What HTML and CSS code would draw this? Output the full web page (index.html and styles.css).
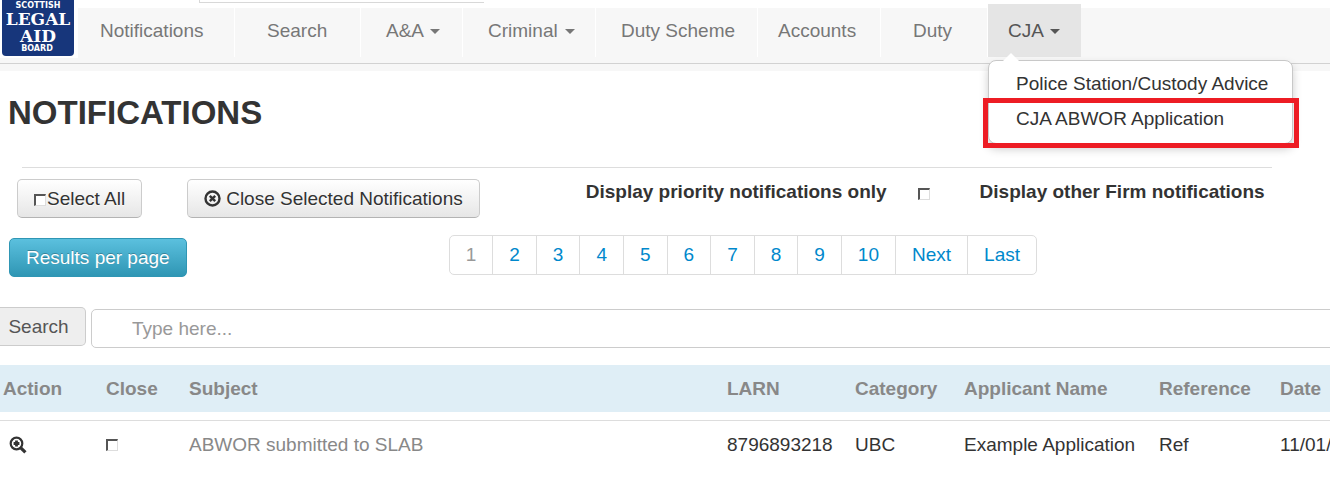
FILE: index.html
```html
<!DOCTYPE html>
<html lang="en">
<head>
  <meta charset="UTF-8">
  <meta name="viewport" content="width=device-width, initial-scale=1.0">
  <title>Notifications</title>
  <link rel="stylesheet" href="styles.css">
</head>
<body>
  <header class="header">
    <div class="header__strip"></div>
    <a class="logo" href="#" aria-label="Scottish Legal Aid Board">
      <svg width="72" height="56" viewBox="0 0 72 56">
        <path d="M0 0h72v52a4 4 0 0 1-4 4H4a4 4 0 0 1-4-4z" fill="#17367b"/>
        <g fill="#fff" text-anchor="middle">
          <text class="logo__small" x="36" y="8">SCOTTISH</text>
          <text class="logo__big" x="36" y="25">LEGAL</text>
          <text class="logo__big" x="36" y="42">AID</text>
          <text class="logo__small" x="35" y="51">BOARD</text>
        </g>
      </svg>
    </a>
    <nav class="nav">
      <ul class="nav__list">
        <li class="nav__item"><a class="nav__link" href="#">Notifications</a></li>
        <li class="nav__item nav__item--wide"><a class="nav__link" href="#">Search</a></li>
        <li class="nav__item nav__item--mid"><a class="nav__link" href="#">A&amp;A <span class="caret"></span></a></li>
        <li class="nav__item nav__item--mid"><a class="nav__link" href="#">Criminal <span class="caret"></span></a></li>
        <li class="nav__item nav__item--mid"><a class="nav__link" href="#">Duty Scheme</a></li>
        <li class="nav__item"><a class="nav__link" href="#">Accounts</a></li>
        <li class="nav__item nav__item--wide"><a class="nav__link" href="#">Duty</a></li>
        <li class="nav__item nav__item--open">
          <a class="nav__link" href="#">CJA <span class="caret"></span></a>
          <ul class="menu">
            <li><a class="menu__link" href="#">Police Station/Custody Advice</a></li>
            <li class="menu__item--marked"><a class="menu__link" href="#">CJA ABWOR Application</a></li>
          </ul>
        </li>
      </ul>
    </nav>
  </header>

  <main>
    <h1 class="title">NOTIFICATIONS</h1>
    <hr class="rule">

    <div class="toolbar">
      <label class="btn"><input class="check check--inline" type="checkbox">Select All</label>
      <button class="btn btn--close" type="button">
        <svg class="icon" width="17" height="17" viewBox="0 0 17 17">
          <circle cx="8.5" cy="8.5" r="7" fill="none" stroke="#333" stroke-width="2.4"/>
          <path d="M5.8 5.8l5.4 5.4M11.2 5.8l-5.4 5.4" stroke="#333" stroke-width="2.4"/>
        </svg>
        Close Selected Notifications
      </button>
      <label class="toolbar__label" for="priority">Display priority notifications only</label>
      <input id="priority" class="check toolbar__check" type="checkbox">
      <span class="toolbar__label toolbar__label--firm">Display other Firm notifications</span>
    </div>

    <div class="pager">
      <button class="btn btn--info" type="button">Results per page</button>
      <ul class="pagination">
        <li><span class="pagination__link pagination__link--current">1</span></li>
        <li><a class="pagination__link" href="#">2</a></li>
        <li><a class="pagination__link" href="#">3</a></li>
        <li><a class="pagination__link" href="#">4</a></li>
        <li><a class="pagination__link" href="#">5</a></li>
        <li><a class="pagination__link" href="#">6</a></li>
        <li><a class="pagination__link" href="#">7</a></li>
        <li><a class="pagination__link" href="#">8</a></li>
        <li><a class="pagination__link" href="#">9</a></li>
        <li><a class="pagination__link" href="#">10</a></li>
        <li><a class="pagination__link" href="#">Next</a></li>
        <li><a class="pagination__link" href="#">Last</a></li>
      </ul>
    </div>

    <form class="search">
      <button class="search__btn" type="button">Search</button>
      <input class="search__input" type="text" placeholder="Type here..." aria-label="Search">
    </form>

    <table class="table">
      <colgroup>
        <col class="col-action">
        <col class="col-close">
        <col>
        <col class="col-larn">
        <col class="col-category">
        <col class="col-name">
        <col class="col-reference">
        <col class="col-date">
      </colgroup>
      <thead>
        <tr>
          <th>Action</th>
          <th>Close</th>
          <th>Subject</th>
          <th>LARN</th>
          <th>Category</th>
          <th>Applicant Name</th>
          <th>Reference</th>
          <th>Date</th>
        </tr>
      </thead>
      <tbody>
        <tr>
          <td class="cell--action">
            <a href="#" aria-label="View">
              <svg class="icon" width="18" height="18" viewBox="0 0 18 18">
                <circle cx="7.5" cy="7.5" r="5.8" fill="none" stroke="#333" stroke-width="2.2"/>
                <path d="M11.8 11.8l4.6 4.6" stroke="#333" stroke-width="3.2"/>
                <path d="M7.5 4.6v5.8M4.6 7.5h5.8" stroke="#333" stroke-width="2.8"/>
              </svg>
            </a>
          </td>
          <td><input class="check" type="checkbox" aria-label="Close notification"></td>
          <td class="cell--subject">ABWOR submitted to SLAB</td>
          <td>8796893218</td>
          <td>UBC</td>
          <td>Example Application</td>
          <td>Ref</td>
          <td>11/01/</td>
        </tr>
      </tbody>
    </table>
  </main>
</body>
</html>
```
FILE: styles.css
```css
* {
  box-sizing: border-box;
  margin: 0;
  padding: 0;
}

body {
  overflow-x: hidden;
  background: #fff;
  color: #333;
  font-family: "Liberation Sans", Arial, sans-serif;
  font-size: 19px;
  line-height: 26px;
}

ul {
  list-style: none;
}

a {
  color: inherit;
  text-decoration: none;
}

button,
input {
  font: inherit;
}

.icon {
  display: block;
}

/* header */
.header {
  position: relative;
  display: flex;
  height: 71px;
  padding-left: 80px;
  background: linear-gradient(#fff 8px, #f7f7f7 8px, #f7f7f7 63px, #d2d2d2 63px, #d2d2d2 64px, #f7f7f7 64px);
}

.header__strip {
  position: absolute;
  top: 0;
  left: 199px;
  width: 285px;
  height: 3px;
  border-bottom: 1px solid #d8d8d8;
  border-left: 1px solid #d8d8d8;
}

.logo {
  position: absolute;
  top: 0;
  left: 0;
  height: 58px;
  padding: 0 4px 0 2px;
  background: #fff;
}

.logo svg {
  display: block;
}

.logo__small {
  font: bold 8px "DejaVu Sans", sans-serif;
}

.logo__big {
  font: bold 17px "DejaVu Serif", serif;
}

.nav {
  padding-top: 4px;
}

.nav__list {
  display: grid;
  grid-template-columns: 155px 126px 102px 133px 162px 123px 107px 93px;
}

.nav__item {
  position: relative;
  height: 53px;
  padding-left: 20px;
  border-right: 1px solid #fff;
  color: #777;
  line-height: 53px;
  white-space: nowrap;
}

.nav__item--mid {
  padding-left: 25px;
}

.nav__item--wide {
  padding-left: 32px;
}

.nav__item--open {
  border-right: 0;
  background: #e5e5e5;
  color: #555;
}

.caret {
  display: inline-block;
  margin-left: 2px;
  border-top: 5px solid currentColor;
  border-right: 5px solid transparent;
  border-left: 5px solid transparent;
  vertical-align: middle;
}

.menu {
  position: absolute;
  z-index: 1;
  top: 56px;
  left: 0;
  width: 305px;
  height: 84px;
  padding-top: 9px;
  border: 1px solid #c8c8c8;
  border-radius: 8px;
  background: #fff;
  box-shadow: 0 5px 10px rgba(0, 0, 0, 0.2);
  color: #333;
  line-height: 28px;
}

.menu::before {
  content: "";
  position: absolute;
  top: -8px;
  left: 14px;
  border-right: 8px solid transparent;
  border-bottom: 8px solid #fff;
  border-left: 8px solid transparent;
}

.menu__link {
  display: block;
  padding-left: 27px;
}

.menu__item--marked {
  height: 50px;
  margin: 0 -7px 0 -6px;
  padding-top: 2px;
  border: 5px solid #ed1c24;
}

.menu__item--marked .menu__link {
  padding-left: 28px;
}

/* page top */
.title {
  padding: 23px 8px 0;
  font-size: 33px;
  line-height: 38px;
}

.rule {
  margin: 35px 58px 0 22px;
  border: 0;
  border-top: 1px solid #ddd;
}

.toolbar {
  display: flex;
  padding: 11px 0 0 17px;
  white-space: nowrap;
}

.btn {
  display: flex;
  align-items: center;
  height: 39px;
  padding: 0 16px;
  border: 1px solid #ccc;
  border-bottom-color: #b3b3b3;
  border-radius: 5px;
  background: linear-gradient(#fff, #e6e6e6);
  color: #333;
  text-shadow: 0 1px 1px rgba(255, 255, 255, 0.75);
}

.btn--close {
  gap: 5px;
  margin-left: 45px;
}

.btn--info {
  margin-top: 3px;
  border-color: #2f96b4;
  background: linear-gradient(#5bc0de, #2f96b4);
  color: #fff;
  text-shadow: 0 -1px 0 rgba(0, 0, 0, 0.25);
}

.check {
  appearance: none;
  display: block;
  width: 12px;
  height: 12px;
  border: 1px solid #ddd;
  border-top: 2px solid #555;
  border-left: 2px solid #555;
  background: #fff;
}

.check--inline {
  margin: 2px 1px 0 0;
}

.toolbar__label {
  margin-left: 106px;
  font-weight: bold;
}

.toolbar__check {
  margin: 9px 0 0 31px;
}

.toolbar__label--firm {
  margin-left: 50px;
}

.pager {
  display: flex;
  align-items: flex-start;
  padding: 17px 0 0 9px;
}

.pagination {
  display: flex;
  margin-left: 262px;
  border: 1px solid #ddd;
  border-radius: 5px;
}

.pagination li + li {
  border-left: 1px solid #ddd;
}

.pagination__link {
  display: block;
  padding: 0 16px;
  color: #08c;
  line-height: 38px;
}

.pagination__link--current {
  color: #999;
}

/* search */
.search {
  display: flex;
  align-items: flex-start;
  gap: 5px;
  margin: 30px -8px 0 0;
}

.search__btn {
  height: 39px;
  width: 86px;
  padding-right: 8px;
  border: 1px solid #ccc;
  border-left: 0;
  border-radius: 0 5px 5px 0;
  background: #eee;
  color: #555;
}

.search__input {
  flex: 1;
  height: 39px;
  margin-top: 2px;
  padding: 0 40px;
  border: 1px solid #ccc;
  border-radius: 5px;
  background: #fff;
}

.search__input::placeholder {
  color: #999;
}

/* results */
.table {
  width: 100%;
  margin-top: 17px;
  border-spacing: 0;
  table-layout: fixed;
  text-align: left;
  white-space: nowrap;
}

.table th {
  height: 55px;
  padding-left: 3px;
  border-bottom: 8px solid #fff;
  background: #dfeef6;
  background-clip: padding-box;
  color: #888;
}

.table td {
  height: 49px;
  padding-left: 3px;
  border-top: 1px solid #ddd;
}

.table .cell--action {
  padding-left: 9px;
}

.table .cell--subject {
  color: #888;
}

.col-action {
  width: 103px;
}

.col-close {
  width: 83px;
}

.col-larn {
  width: 128px;
}

.col-category {
  width: 109px;
}

.col-name {
  width: 195px;
}

.col-reference {
  width: 121px;
}

.col-date {
  width: 53px;
}
```
